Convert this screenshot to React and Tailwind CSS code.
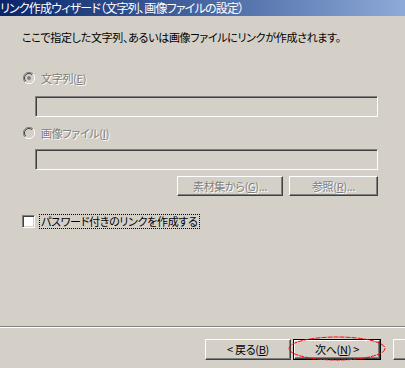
import React from "react";

const font = "font-['MS_UI_Gothic','Noto_Sans_CJK_JP',sans-serif] [font-feature-settings:'palt']";

function Radio({ checked }) {
  return (
    <svg width="12" height="12" viewBox="0 0 12 12" className="shrink-0">
      <circle cx="6" cy="6" r="5.5" fill="#d4d0c8" />
      <path d="M10 2 A5.5 5.5 0 0 0 2 10" stroke="#808080" strokeWidth="1" fill="none" />
      <path d="M9.2 2.8 A4.5 4.5 0 0 0 2.8 9.2" stroke="#404040" strokeWidth="1" fill="none" />
      <path d="M2 10 A5.5 5.5 0 0 0 10 2" stroke="#ffffff" strokeWidth="1" fill="none" />
      {checked && <circle cx="6" cy="6" r="2" fill="#808080" />}
    </svg>
  );
}

function Sunken({ className = "" }) {
  return (
    <div
      className={
        "border border-t-[#808080] border-l-[#808080] border-b-white border-r-white bg-[#d4d0c8] shadow-[inset_1px_1px_0_#404040,inset_-1px_-1px_0_#d4d0c8] " +
        className
      }
    />
  );
}

function Btn({ children, className = "", disabled }) {
  return (
    <div
      className={
        "flex items-center justify-center border border-t-white border-l-white border-b-[#404040] border-r-[#404040] bg-[#d4d0c8] shadow-[inset_-1px_-1px_0_#808080] text-[11px] tracking-[-0.3px] leading-none whitespace-nowrap " +
        (disabled ? "text-[#808080] [text-shadow:1px_1px_0_#fff] " : "text-black ") +
        className
      }
    >
      {children}
    </div>
  );
}

export default function App() {
  return (
    <div className={"w-[405px] h-[368px] overflow-hidden bg-[#d4d0c8] flex flex-col " + font}>
      <div className="h-[16px] shrink-0 bg-gradient-to-r from-[#0a246a] to-[#8eaad8] text-white text-[12px] tracking-[-0.8px] leading-[16px] whitespace-nowrap">
        リンク作成ウィザード（文字列、画像ファイルの設定）
      </div>

      <div className="pl-[22px] mt-[15px] text-[11px] tracking-[-0.3px] leading-[12px] text-black whitespace-nowrap">
        ここで指定した文字列、あるいは画像ファイルにリンクが作成されます。
      </div>

      <div className="flex items-center gap-[6px] pl-[23px] mt-[29px] h-[12px] text-[11px] tracking-[-0.3px] leading-[12px] text-[#808080] [text-shadow:1px_1px_0_#fff]">
        <Radio checked />
        <span>
          文字列(<span className="underline">E</span>)
        </span>
      </div>

      <Sunken className="ml-[35px] mt-[12px] w-[343px] h-[21px] shrink-0" />

      <div className="flex items-center gap-[6px] pl-[23px] mt-[10px] h-[12px] text-[11px] tracking-[-0.3px] leading-[12px] text-[#808080] [text-shadow:1px_1px_0_#fff]">
        <Radio />
        <span>
          画像ファイル(<span className="underline">I</span>)
        </span>
      </div>

      <Sunken className="ml-[35px] mt-[10px] w-[343px] h-[21px] shrink-0" />

      <div className="flex pl-[177px] mt-[6px] gap-[6px]">
        <Btn disabled className="w-[106px] h-[20px]">
          素材集から(<span className="underline">G</span>)...
        </Btn>
        <Btn disabled className="w-[89px] h-[20px]">
          参照(<span className="underline">R</span>)...
        </Btn>
      </div>

      <div className="flex items-center pl-[22px] mt-[18px] h-[15px]">
        <div className="w-[13px] h-[13px] shrink-0 bg-white border border-t-[#808080] border-l-[#808080] border-b-white border-r-white shadow-[inset_1px_1px_0_#404040,inset_-1px_-1px_0_#d4d0c8]" />
        <div className="ml-[4px] h-[15px] px-[1px] border border-dotted border-black text-[11px] tracking-[-0.3px] leading-[13px] text-black whitespace-nowrap">
          パスワード付きのリンクを作成する
        </div>
      </div>

      <div className="mt-[97px] h-[2px] shrink-0 border-t border-t-[#808080] border-b border-b-white" />

      <div className="flex pl-[205px] mt-[11px]">
        <Btn className="w-[86px] h-[21px] shrink-0">
          &lt; 戻る(<span className="underline">B</span>)
        </Btn>
        <div className="relative ml-[2px] w-[88px] h-[21px] shrink-0 border border-black">
          <Btn className="w-full h-full">
            次へ(<span className="underline">N</span>) &gt;
          </Btn>
          <svg
            className="absolute left-[-6px] top-[-4px] overflow-visible"
            width="98"
            height="25"
            viewBox="0 0 98 25"
          >
            <ellipse cx="49" cy="12.5" rx="48" ry="11.5" fill="none" stroke="#ff0000" strokeWidth="1" strokeDasharray="5 1" />
          </svg>
        </div>
        <Btn className="ml-[12px] w-[86px] h-[21px] shrink-0" />
      </div>
    </div>
  );
}
